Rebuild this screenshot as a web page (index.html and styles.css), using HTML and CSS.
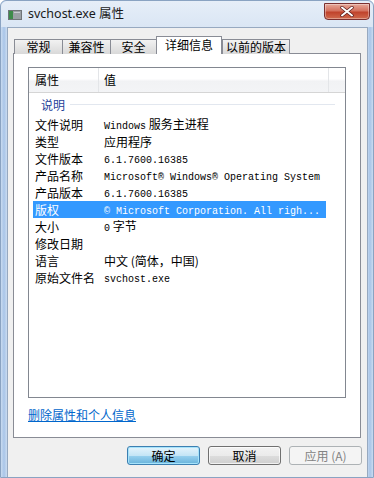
FILE: index.html
```html
<!DOCTYPE html>
<html lang="zh-CN">
<head>
<meta charset="utf-8">
<title>svchost.exe 属性</title>
<link rel="stylesheet" href="styles.css">
</head>
<body>
<div class="window">
  <div class="titlebar">
    <svg class="app-icon" width="14" height="10" viewBox="0 0 14 10">
      <rect x="0" y="0" width="14" height="10" fill="#6f7478"/>
      <rect x="1" y="1" width="12" height="8" fill="#9aa0a5"/>
      <rect x="1" y="1" width="4" height="8" fill="#3d8b4a"/>
      <rect x="6" y="2" width="6" height="1" fill="#c8ccd0"/>
    </svg>
    <span class="title">svchost.exe 属性</span>
    <div class="close">
      <svg width="14" height="11" viewBox="0 0 14 11">
        <path d="M2 1.5 L12 9.5 M12 1.5 L2 9.5" stroke="#5a1c1c" stroke-width="3.4" stroke-linecap="round"/>
        <path d="M2 1.5 L12 9.5 M12 1.5 L2 9.5" stroke="#ffffff" stroke-width="2" stroke-linecap="round"/>
      </svg>
    </div>
  </div>
  <div class="client">
    <div class="tabs">
      <div class="tab w48">常规</div>
      <div class="tab w48">兼容性</div>
      <div class="tab w46">安全</div>
      <div class="tab active">详细信息</div>
      <div class="tab w68">以前的版本</div>
    </div>
    <div class="panel">
      <div class="list">
        <div class="list-header">
          <div class="hcol name">属性</div>
          <div class="hcol value">值</div>
          <div class="hcol rest"></div>
        </div>
        <div class="group"><span class="group-label">说明</span><span class="group-line"></span></div>
        <div class="row"><span class="k">文件说明</span><span class="v"><span class="m">Windows</span> 服务主进程</span></div>
        <div class="row"><span class="k">类型</span><span class="v">应用程序</span></div>
        <div class="row"><span class="k">文件版本</span><span class="v"><span class="m">6.1.7600.16385</span></span></div>
        <div class="row"><span class="k">产品名称</span><span class="v"><span class="m">Microsoft® Windows® Operating System</span></span></div>
        <div class="row"><span class="k">产品版本</span><span class="v"><span class="m">6.1.7600.16385</span></span></div>
        <div class="row selected"><span class="k">版权</span><span class="v"><span class="m">© Microsoft Corporation. All righ...</span></span></div>
        <div class="row"><span class="k">大小</span><span class="v"><span class="m">0</span> 字节</span></div>
        <div class="row"><span class="k">修改日期</span><span class="v"></span></div>
        <div class="row"><span class="k">语言</span><span class="v">中文 (简体，中国)</span></div>
        <div class="row"><span class="k">原始文件名</span><span class="v"><span class="m">svchost.exe</span></span></div>
      </div>
      <a class="link" href="#">删除属性和个人信息</a>
    </div>
    <div class="buttons">
      <div class="btn default">确定</div>
      <div class="btn">取消</div>
      <div class="btn disabled">应用 (A)</div>
    </div>
  </div>
</div>
</body>
</html>
```

FILE: styles.css
```css
* { box-sizing: border-box; }
html, body {
  margin: 0;
  padding: 0;
  width: 374px;
  height: 478px;
  overflow: hidden;
  background: #ffffff;
}
body {
  font-family: "Noto Sans CJK SC", "Noto Sans", sans-serif;
  font-size: 12px;
  color: #000;
}
.window {
  width: 374px;
  height: 478px;
  background: linear-gradient(to right, #c9dbf0 0, #a9c5e8 3px, #d6e4f4 7px, #dfe9f5 50%, #d6e4f4 calc(100% - 7px), #a9c5e8 calc(100% - 3px), #c9dbf0 100%);
  border: 1px solid #8aa3c2;
  border-radius: 6px 6px 0 0;
  display: flex;
  flex-direction: column;
}
.titlebar {
  height: 26px;
  display: flex;
  align-items: center;
  padding-left: 7px;
  background: linear-gradient(#e6eef8, #dae6f4);
  border-radius: 6px 6px 0 0;
  position: relative;
}
.app-icon { margin-top: 1px; }
.title {
  margin-left: 6px;
  font-family: "Noto Sans", "Noto Sans CJK SC", sans-serif;
  font-size: 12.5px;
  color: #1a1a1a;
  line-height: 1;
}
.close {
  position: absolute;
  right: 3px;
  top: 2px;
  width: 46px;
  height: 17px;
  border: 1px solid #7a2f2f;
  border-radius: 0 0 4px 4px;
  background: linear-gradient(#e6a899 0, #d4725f 45%, #c0432c 55%, #d06a4e 100%);
  display: flex;
  align-items: center;
  justify-content: center;
  box-shadow: inset 0 0 0 1px rgba(255,255,255,0.35);
}
.client {
  margin: 0 5px 0 6px;
  flex: 1;
  background: #f0f0f0;
  border: 1px solid #97a9c0;
  border-bottom: none;
  padding: 8px 5px 0 5px;
  display: flex;
  flex-direction: column;
}
.tabs {
  display: flex;
  align-items: flex-end;
  height: 18px;
  padding-left: 1px;
  margin-bottom: -1px;
  position: relative;
  z-index: 1;
}
.tab {
  height: 15px;
  border: 1px solid #898c95;
  border-bottom: none;
  margin-right: -1px;
  background: linear-gradient(#f2f2f2, #e5e5e5 50%, #d9d9d9);
  display: flex;
  align-items: center;
  justify-content: center;
  line-height: 1;
  font-size: 12px;
}
.w48 { width: 49px; }
.w46 { width: 47px; }
.w68 { width: 68px; }
.tab.active {
  width: 66px;
  height: 18px;
  background: #ffffff;
  border-bottom: none;
  margin-left: 0;
  margin-right: 0;
  z-index: 2;
  padding-bottom: 2px;
}
.panel {
  width: 348px;
  height: 385px;
  border: 1px solid #898c95;
  background: #ffffff;
  padding: 13px 14px 0 14px;
  display: flex;
  flex-direction: column;
}
.list {
  width: 318px;
  height: 331px;
  border: 1px solid #828790;
  background: #fff;
  display: flex;
  flex-direction: column;
}
.list-header {
  height: 25px;
  display: flex;
  background: linear-gradient(#ffffff, #ffffff 45%, #f1f2f4 55%, #f3f4f6);
  border-bottom: 1px solid #d5d5d5;
}
.hcol {
  display: flex;
  align-items: center;
  font-size: 12px;
  line-height: 1;
}
.hcol.name {
  width: 70px;
  padding-left: 6px;
  border-right: 1px solid #e3e5e8;
}
.hcol.value {
  width: 230px;
  padding-left: 5px;
  border-right: 1px solid #e3e5e8;
}
.hcol.rest { flex: 1; }
.group {
  height: 23px;
  display: flex;
  align-items: center;
  padding-left: 12px;
  padding-right: 10px;
}
.group-label {
  color: #1e3f9a;
  font-size: 12px;
  line-height: 1;
  margin-right: 5px;
}
.group-line {
  flex: 1;
  height: 1px;
  background: #e2e7ef;
}
.row {
  height: 17px;
  display: flex;
  align-items: center;
  margin-left: 4px;
  width: 293px;
  line-height: 1;
  white-space: nowrap;
}
.row .k {
  width: 71px;
  padding-left: 2px;
  font-size: 12px;
}
.row .v {
  font-size: 12px;
  letter-spacing: 0;
}
.m {
  font-family: "Liberation Mono", monospace;
  font-size: 10px;
}
.row.selected {
  background: #3399ff;
  color: #ffffff;
}
.link {
  margin-top: 9px;
  margin-left: 0;
  color: #0066cc;
  text-decoration: underline;
  font-size: 12px;
  line-height: 16px;
  align-self: flex-start;
}
.buttons {
  display: flex;
  justify-content: flex-end;
  gap: 8px;
  padding-top: 8px;
}
.btn {
  width: 73px;
  height: 19px;
  border: 1px solid #707070;
  border-radius: 3px;
  background: linear-gradient(#f2f2f2 0, #ebebeb 50%, #dddddd 51%, #cfcfcf 100%);
  display: flex;
  align-items: center;
  justify-content: center;
  font-size: 12px;
  line-height: 1;
  box-shadow: inset 0 0 0 1px rgba(255,255,255,0.7);
}
.btn.default {
  border-color: #3c7fb1;
  background: linear-gradient(#e5f4fc 0, #c4e5f6 50%, #98d1ef 51%, #68b3db 100%);
  box-shadow: inset 0 0 0 1px #a6e3fb;
}
.btn.disabled {
  border-color: #adb2b5;
  background: #f4f4f4;
  color: #838383;
  box-shadow: none;
}
```
